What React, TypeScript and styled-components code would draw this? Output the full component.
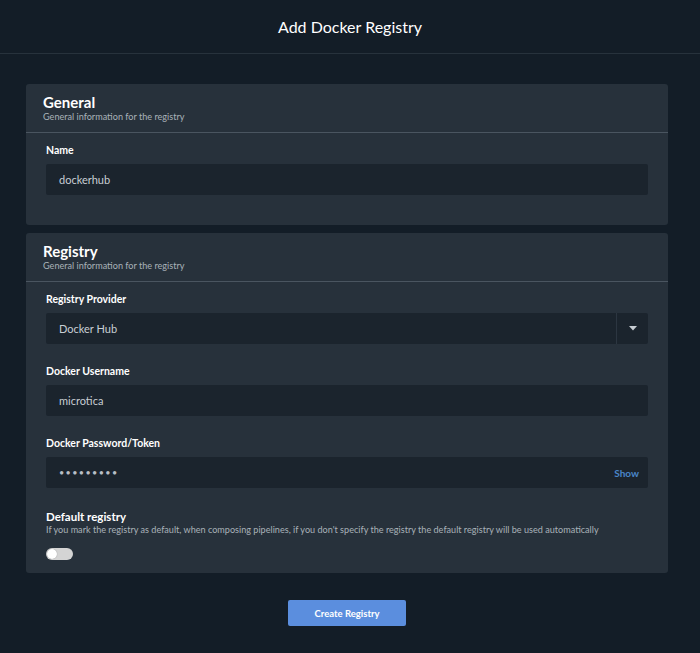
import { FC, useState } from "react";
import styled, { createGlobalStyle } from "styled-components";

const GlobalStyle = createGlobalStyle`
  html, body {
    margin: 0;
    padding: 0;
    background: #131d27;
  }
  body {
    font-family: Lato, "Open Sans", sans-serif;
    color: #ffffff;
  }
  * {
    box-sizing: border-box;
  }
`;

const Page = styled.div`
  width: 700px;
  min-height: 653px;
  background: #131d27;
`;

const Header = styled.div`
  height: 54px;
  display: flex;
  align-items: center;
  justify-content: center;
  border-bottom: 1px solid #27323c;
  font-size: 16px;
  font-weight: 400;
  color: #ffffff;
  padding-bottom: 1px;
`;

const Body = styled.div`
  padding: 30px 32px 0 26px;
  display: flex;
  flex-direction: column;
  gap: 8px;
`;

const Card = styled.div<{ bottom: number }>`
  background: #27313b;
  border-radius: 3px;
  padding-bottom: ${({ bottom }) => bottom}px;
`;

const CardHead = styled.div`
  padding: 9px 17px 9px;
  border-bottom: 1px solid #4a5560;
`;

const CardTitle = styled.div`
  font-size: 15px;
  font-weight: 700;
  line-height: 18px;
  color: #ffffff;
`;

const CardSubtitle = styled.div`
  font-size: 9.1px;
  line-height: 12px;
  color: #a9b1b9;
`;

const CardBody = styled.div`
  padding: 10px 20px 0;
  display: flex;
  flex-direction: column;
  gap: 20px;
`;

const Field = styled.div`
  display: flex;
  flex-direction: column;
`;

const Label = styled.div`
  font-size: 10.5px;
  font-weight: 700;
  line-height: 14px;
  color: #ffffff;
  margin-bottom: 7px;
`;

const InputBox = styled.div`
  height: 31px;
  background: #1b242d;
  border-radius: 2px;
  display: flex;
  align-items: center;
  padding-left: 13px;
  font-size: 11px;
  color: #c8ced4;
`;

const Grow = styled.span`
  flex: 1;
`;

const Dots = styled(Grow)`
  font-size: 9px;
  letter-spacing: 1.4px;
  color: #b8bfc6;
`;

const Caret = styled.div`
  width: 32px;
  height: 100%;
  border-left: 1px solid #2c3641;
  display: flex;
  align-items: center;
  justify-content: center;
`;

const ShowLink = styled.span`
  font-size: 10px;
  font-weight: 700;
  color: #4a86c8;
  margin-right: 9px;
`;

const DefaultTitle = styled.div`
  margin-top: 2px;
  font-size: 11.5px;
  font-weight: 700;
  line-height: 14px;
  color: #ffffff;
`;

const DefaultDesc = styled.div`
  font-size: 9.1px;
  line-height: 12px;
  color: #a9b1b9;
`;

const Toggle = styled.button<{ on: boolean }>`
  margin-top: 12px;
  width: 27px;
  height: 12px;
  border-radius: 6px;
  border: none;
  padding: 0;
  background: ${({ on }) => (on ? "#5b8ede" : "#d4d4d4")};
  position: relative;
  cursor: pointer;

  &::after {
    content: "";
    position: absolute;
    top: 1px;
    left: ${({ on }) => (on ? "16px" : "1px")};
    width: 10px;
    height: 10px;
    border-radius: 50%;
    background: #ffffff;
    box-shadow: 0 0 1px rgba(0, 0, 0, 0.4);
  }
`;

const Footer = styled.div`
  display: flex;
  justify-content: center;
  padding: 27px 0;
  margin-left: -6px;
`;

const PrimaryButton = styled.button`
  width: 118px;
  height: 26px;
  border: none;
  border-radius: 2px;
  background: #5b8ede;
  color: #ffffff;
  font-family: Lato, "Open Sans", sans-serif;
  font-size: 9.5px;
  font-weight: 700;
  cursor: pointer;
`;

const App: FC = () => {
  const [isDefault, setIsDefault] = useState<boolean>(false);

  return (
    <Page>
      <GlobalStyle />
      <Header>Add Docker Registry</Header>
      <Body>
        <Card bottom={30}>
          <CardHead>
            <CardTitle>General</CardTitle>
            <CardSubtitle>General information for the registry</CardSubtitle>
          </CardHead>
          <CardBody>
            <Field>
              <Label>Name</Label>
              <InputBox>dockerhub</InputBox>
            </Field>
          </CardBody>
        </Card>

        <Card bottom={13}>
          <CardHead>
            <CardTitle>Registry</CardTitle>
            <CardSubtitle>General information for the registry</CardSubtitle>
          </CardHead>
          <CardBody>
            <Field>
              <Label>Registry Provider</Label>
              <InputBox>
                <Grow>Docker Hub</Grow>
                <Caret>
                  <svg width="8" height="5" viewBox="0 0 8 5">
                    <path d="M0 0 L8 0 L4 4.5 Z" fill="#c7cdd3" />
                  </svg>
                </Caret>
              </InputBox>
            </Field>
            <Field>
              <Label>Docker Username</Label>
              <InputBox>microtica</InputBox>
            </Field>
            <Field>
              <Label>Docker Password/Token</Label>
              <InputBox>
                <Dots>•••••••••</Dots>
                <ShowLink>Show</ShowLink>
              </InputBox>
            </Field>
            <Field>
              <DefaultTitle>Default registry</DefaultTitle>
              <DefaultDesc>
                If you mark the registry as default, when composing pipelines, if you don't specify the registry the
                default registry will be used automatically
              </DefaultDesc>
              <Toggle on={isDefault} onClick={() => setIsDefault(!isDefault)} />
            </Field>
          </CardBody>
        </Card>
      </Body>
      <Footer>
        <PrimaryButton>Create Registry</PrimaryButton>
      </Footer>
    </Page>
  );
};

export default App;
